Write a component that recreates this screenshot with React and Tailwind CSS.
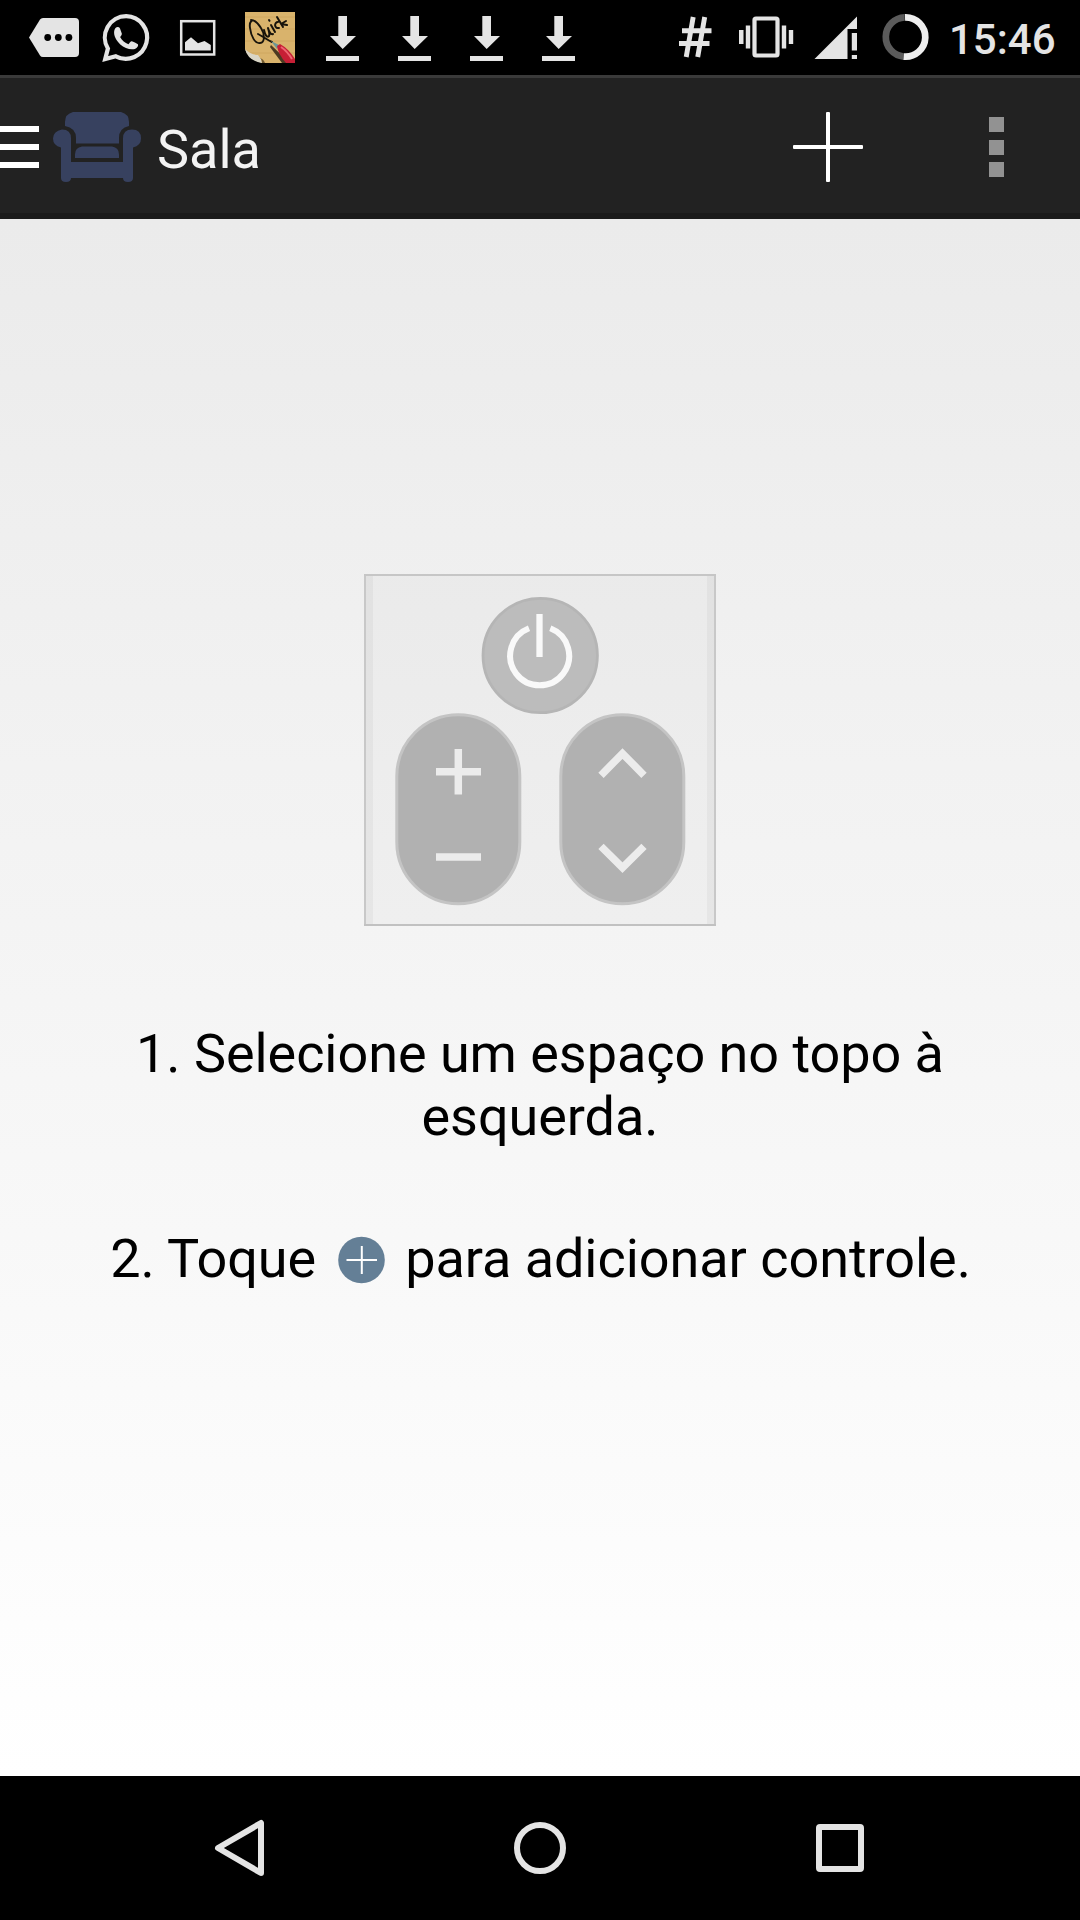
const statusColor = '#e4e4e4';

function MessageIcon() {
  return (
    <svg className="w-[72px] h-[75px]" viewBox="18 0 72 75" fill={statusColor}>
      <path d="M43 18h32a4 4 0 0 1 4 4v31a4 4 0 0 1-4 4H43q-2 0-3-1.600L29 37.500 40 19.600Q41 18 43 18z" />
      <g fill="#000">
        <circle cx="47.700" cy="37.500" r="3.400" />
        <circle cx="58.300" cy="37.500" r="3.400" />
        <circle cx="68.900" cy="37.500" r="3.400" />
      </g>
    </svg>
  );
}

function WhatsAppIcon() {
  return (
    <svg className="w-[72px] h-[75px]" viewBox="90 0 72 75" fill={statusColor}>
      <path d="M126.200 16.200a21.300 21.300 0 0 0-18.300 32.300L105.200 59l10.600-2.700A21.300 21.300 0 1 0 126.200 16.200z" fill="none" stroke={statusColor} strokeWidth="4.200" />
      <path d="M114.200 31c.3-2.500 2.200-4.200 3.800-4 1.200.1 1.600.6 2 1.500l1.800 5c.3 1-.7 2.400-1.700 3.600 2 3.600 4.800 5.800 8.400 7.100 1.100-1.300 2.200-3.200 3.300-3 1.200.2 5 2 6.100 3 .8 1.300-.6 3.800-3 4.700-4.500 1.400-10.400-.9-14.600-4.500-3.600-3.400-6.900-8.500-6.100-13.400z" />
    </svg>
  );
}

function PictureIcon() {
  return (
    <svg className="w-[72px] h-[75px]" viewBox="162 0 72 75">
      <rect x="181.200" y="21.200" width="33" height="33.300" fill="none" stroke={statusColor} strokeWidth="2.500" />
      <path d="M185 50.500v-8.300l6-4.900 7 6 6.500-2.300 6.300 4v5.500z" fill={statusColor} />
    </svg>
  );
}

function QuickNoteIcon() {
  return (
    <svg className="w-[72px] h-[75px]" viewBox="234 0 72 75">
      <rect x="245" y="12" width="50" height="51" fill="#d9b36c" />
      <path d="M245 17h50M245 29h50M245 41h50M245 53h50" stroke="#cda55d" strokeWidth=".8" />
      <path d="M245 49q3 10 17 14h-17z" fill="#000" />
      <path d="M245 49q6 6 13 6 3 3 4 8-14-2-17-14z" fill="#d9d5c6" />
      <path d="M258 57q4 1 4 6h3q-1-4-7-6z" fill="#6f5930" />
      <g fill="none" stroke="#17130b" strokeLinecap="round" strokeLinejoin="round">
        <path d="M256 22c-4-4-7 0-6 6 1 8 5 16 10 15 5 0 5-9 1-15-3-5-7-8-10-8M258 34c6 3 9 6 14 8" strokeWidth="1.900" />
        <path d="M264 30c1 5 3 8 5 6 1-2-.5-6-1-8 1 4 3 7 5 6M271 25l4 7" strokeWidth="2" />
        <path d="M269 20l.5.800M278 22c-4 0-4 7 1 6M277 17l6 10M286 21l-5 3 6 1" strokeWidth="2" />
      </g>
      <path d="M271 45l-1 2 12 16h8z" fill="#4c3a22" />
      <path d="M271 41l8 4-2 4z" fill="#6d9696" />
      <path d="M277 46l3-2q9 5 15 15v4h-9q-8-9-9-17z" fill="#c61f35" />
      <path d="M281 47q6 4 11 12" stroke="#ee6673" strokeWidth="2" fill="none" />
    </svg>
  );
}

function DownloadIcon() {
  return (
    <svg className="w-[72px] h-[75px]" viewBox="306 0 72 75" fill={statusColor}>
      <path d="M338.300 16h8.700v20h9L342.700 49 330 36h8.300zM326 56h33v5h-33z" />
    </svg>
  );
}

function StatusBar() {
  return (
    <div className="h-[75px] bg-black flex items-center">
      <div className="flex pl-[18px]">
        <MessageIcon />
        <WhatsAppIcon />
        <PictureIcon />
        <QuickNoteIcon />
        {[1, 2, 3, 4].map((n) => (
          <DownloadIcon key={n} />
        ))}
      </div>
      <svg className="ml-[66px] w-[276px] h-[75px]" viewBox="660 0 276 75" fill={statusColor}>
        <path d="M693.200 17 686.200 57M704.700 17 697.700 57M682 30.700h29.500M679 43.500h30.500" stroke={statusColor} strokeWidth="4.900" />
        <rect x="754.500" y="18.500" width="23" height="37" rx="1.500" fill="none" stroke={statusColor} strokeWidth="4.200" />
        <path d="M739 30h4.500v14H739zM745.800 25.500h4.400v23h-4.400zM781.800 25.500h4.400v23h-4.400zM788.800 30h4.400v14h-4.400z" />
        <path d="M857 16.500V29h-9.500v30H814.500zM851.800 33h5.200v17.500h-5.200zM851.800 55h5.200v4h-5.200z" />
        <g fill="none" strokeWidth="6.700">
          <path d="M904.700 17.300a19.700 19.700 0 0 0-1 39.300" stroke="#5b5b5b" />
          <path d="M905 17.300a19.700 19.700 0 1 1-1.300 39.300" stroke="#eee" />
        </g>
      </svg>
      <span className="ml-[13px] mt-[5px] text-[42px] leading-none font-medium text-[#e4e4e4]">15:46</span>
    </div>
  );
}

function SofaIcon() {
  return (
    <svg className="ml-[14px] -mt-[2px] w-[88px] h-[71px]" viewBox="53 111 88 71" fill="#37415f">
      <path d="M73 112h48q8 2 8 10v4q-10 2-10 12v5.500H76V138q0-10-11-12v-4q0-8 8-10z" />
      <path d="M82 146.500h30q7 1 7 8v3.500H75v-3.500q0-7 7-8z" />
      <path d="M62 129.500q9 0 9 9V162h52v-23.500q0-9 9-9t9 9q0 7-8 9V178q0 4-5 4t-5-4H71q0 4-5 4t-5-4v-30.500q-8-2-8-9t9-9z" />
    </svg>
  );
}

function Header() {
  return (
    <header className="h-[144px] pt-[3px] bg-[#222222] border-t-[3px] border-t-[#3a3a3a] border-b-[6px] border-b-[#1b1b1b] flex items-center">
      <div className="w-[39px] flex flex-col gap-3 -mt-px">
        <div className="h-1.5 bg-white" />
        <div className="h-1.5 bg-white" />
        <div className="h-1.5 bg-white" />
      </div>
      <SofaIcon />
      <h1 className="ml-4 mt-[5px] text-[54px] leading-none text-[#f3f3f3]">Sala</h1>
      <svg className="ml-auto w-[72px] h-[72px]" viewBox="0 0 72 72" fill="#fff">
        <rect x="1" y="34" width="70" height="4" rx="1" />
        <rect x="34" y="1" width="4" height="70" rx="1" />
      </svg>
      <div className="ml-[125px] mr-[76px] flex flex-col gap-[7.500px]">
        <div className="size-[15px] bg-[#929292]" />
        <div className="size-[15px] bg-[#929292]" />
        <div className="size-[15px] bg-[#929292]" />
      </div>
    </header>
  );
}

function RemoteIllustration() {
  return (
    <svg className="w-[352px] h-[353px]" viewBox="364 574 352 353">
      <rect x="365" y="575" width="350" height="351" fill="#000" fillOpacity=".018" />
      <path d="M366 576h7v349h-7zM707 576h7v349h-7z" fill="#000" fillOpacity=".035" />
      <path d="M365 575v351M715 575v351" stroke="#c8c8c8" strokeWidth="2" />
      <path d="M364 575h352" stroke="#c6c6c6" strokeWidth="2" />
      <path d="M364 925h352" stroke="#c1c1c1" strokeWidth="2" />
      <circle cx="540.200" cy="655.500" r="57.200" fill="#bcbcbc" stroke="#b5b5b5" strokeWidth="2.800" />
      <path d="M529 628.300a29.500 29.500 0 1 0 21.300 0" fill="none" stroke="#f9f9f9" strokeWidth="6" />
      <path d="M539.500 614v43" stroke="#f9f9f9" strokeWidth="6.300" />
      <g fill="#b1b1b1" stroke="#c4c4c4" strokeWidth="3">
        <rect x="396.800" y="714.800" width="123" height="189" rx="61.500" />
        <rect x="560.800" y="714.800" width="123" height="189" rx="61.500" />
      </g>
      <g fill="none" stroke="#ececec" strokeWidth="7.500">
        <path d="M436 771.800h45M458.300 749v45.500M436 857h45" />
        <path d="M601 775.300 622.500 753.500 644 775.300M601 846.300 622.500 867.700 644 846.300" />
      </g>
    </svg>
  );
}

function NavBar() {
  return (
    <nav className="h-36 bg-black flex items-center justify-center">
      <svg className="w-[720px] h-[144px]" viewBox="180 1776 720 144" fill="none" stroke="#e4e4e4" strokeWidth="6" strokeLinejoin="round">
        <path d="M261 1823v50l-43-25z" />
        <circle cx="540" cy="1848" r="23" />
        <rect x="819" y="1827" width="42" height="42" rx="1" />
      </svg>
    </nav>
  );
}

export default function App() {
  return (
    <div className="w-[1080px] h-[1920px] flex flex-col overflow-hidden font-[Roboto,sans-serif]">
      <StatusBar />
      <Header />
      <main className="flex-1 flex flex-col items-center bg-linear-to-b from-[#ebebeb] to-white pt-[355px] text-black text-[54px] leading-[63px] tracking-[-0.05px] text-center">
        <RemoteIllustration />
        <p className="mt-[95px] w-[860px]">1. Selecione um espaço no topo à esquerda.</p>
        <p className="mt-[79px] pl-px flex items-center whitespace-nowrap">
          2. Toque
          <svg className="ml-[22px] mr-5 mt-[3px] w-[47px] h-12" viewBox="0 0 47 48">
            <circle cx="23.500" cy="24" r="23.300" fill="#647f96" />
            <path d="M8.500 24h30.500M23.800 10v28" stroke="#fff" strokeWidth="2" />
          </svg>
          para adicionar controle.
        </p>
      </main>
      <NavBar />
    </div>
  );
}
